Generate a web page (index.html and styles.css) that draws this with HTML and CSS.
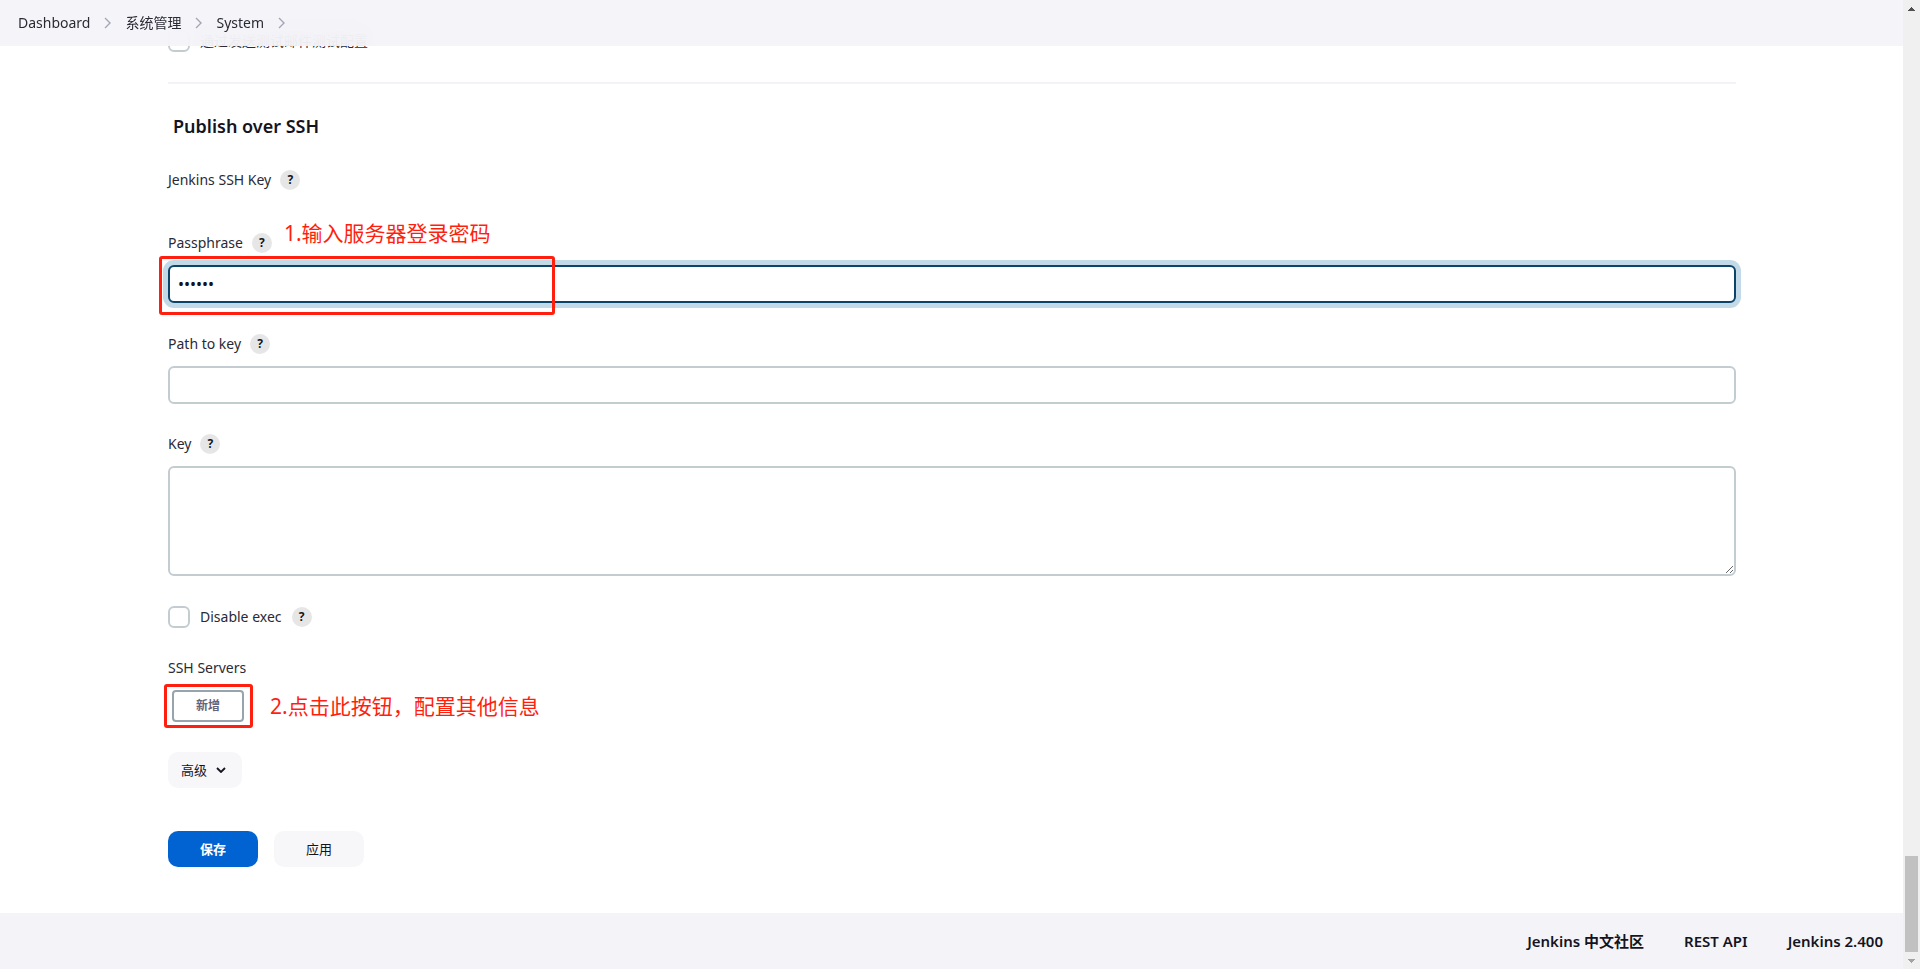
FILE: index.html
```html
<!DOCTYPE html>
<html lang="zh-CN">
<head>
    <meta charset="UTF-8">
    <meta name="viewport" content="width=device-width, initial-scale=1.0">
    <title>System [Jenkins]</title>
    <link rel="stylesheet" href="styles.css">
</head>
<body>
    <div class="page">
        <nav class="breadcrumbs">
            <a href="#">Dashboard</a>
            <svg class="chevron" viewBox="0 0 7 12"><path d="M1 1l5 5-5 5"/></svg>
            <a href="#">系统管理</a>
            <svg class="chevron" viewBox="0 0 7 12"><path d="M1 1l5 5-5 5"/></svg>
            <a href="#">System</a>
            <svg class="chevron" viewBox="0 0 7 12"><path d="M1 1l5 5-5 5"/></svg>
        </nav>

        <form class="config">
            <div class="check-row">
                <input type="checkbox" id="testMail">
                <label for="testMail">通过发送测试邮件测试配置</label>
            </div>

            <section class="section">
                <h2>Publish over SSH</h2>

                <div class="label-row">
                    <span>Jenkins SSH Key</span>
                    <button type="button" class="help">?</button>
                </div>

                <div class="field passphrase">
                    <div class="label-row">
                        <label for="passphrase">Passphrase</label>
                        <button type="button" class="help">?</button>
                        <span class="note">1.输入服务器登录密码</span>
                    </div>
                    <div class="input-wrap">
                        <input type="password" id="passphrase" class="input focused" value="123456">
                        <div class="mark mark-input"></div>
                    </div>
                </div>

                <div class="field">
                    <div class="label-row">
                        <label for="keyPath">Path to key</label>
                        <button type="button" class="help">?</button>
                    </div>
                    <input type="text" id="keyPath" class="input">
                </div>

                <div class="field">
                    <div class="label-row">
                        <label for="key">Key</label>
                        <button type="button" class="help">?</button>
                    </div>
                    <textarea id="key" class="input textarea"></textarea>
                </div>

                <div class="field check-row">
                    <input type="checkbox" id="disableExec">
                    <label for="disableExec">Disable exec</label>
                    <button type="button" class="help">?</button>
                </div>

                <div class="field">
                    <div class="label-row">SSH Servers</div>
                    <div class="servers">
                        <div class="add-wrap">
                            <button type="button" class="add">新增</button>
                            <div class="mark mark-add"></div>
                        </div>
                        <span class="note">2.点击此按钮，配置其他信息</span>
                    </div>
                </div>

                <button type="button" class="btn advanced">
                    高级
                    <svg viewBox="0 0 10 6"><path d="M1 1l4 4 4-4"/></svg>
                </button>
            </section>

            <div class="actions">
                <button type="submit" class="btn primary">保存</button>
                <button type="button" class="btn">应用</button>
            </div>
        </form>

        <footer class="footer">
            <a href="#">Jenkins 中文社区</a>
            <a href="#">REST API</a>
            <a href="#">Jenkins 2.400</a>
        </footer>
    </div>

    <div class="scrollbar">
        <svg class="arrow-up" viewBox="0 0 7 4"><path d="M3 0h1v1h1v1h1v1h1v1H0V3h1V2h1V1h1z"/></svg>
        <div class="thumb"></div>
        <svg class="arrow-down" viewBox="0 0 7 4"><path d="M0 0h7v1H6v1H5v1H4v1H3V3H2V2H1V1H0z"/></svg>
    </div>
</body>
</html>
```

FILE: styles.css
```css
* {
    box-sizing: border-box;
}
body {
    display: flex;
    height: 100vh;
    margin: 0;
    overflow: hidden;
    font-family: "Noto Sans", "Noto Sans CJK SC", sans-serif;
    font-size: 14px;
    line-height: 20px;
    color: #14141f;
    background: #fff;
}
a {
    color: inherit;
    text-decoration: none;
}
button,
input,
textarea {
    font: inherit;
    color: inherit;
    margin: 0;
}
.page {
    position: relative;
    flex: 1;
    display: flex;
    flex-direction: column;
}

/* header */
.breadcrumbs {
    position: absolute;
    top: 0;
    left: 0;
    right: 0;
    z-index: 2;
    display: flex;
    align-items: center;
    gap: 14px;
    height: 46px;
    padding: 0 18px;
    background: rgba(244, 244, 248, 0.9);
    backdrop-filter: blur(15px);
}
.breadcrumbs a,
.label-row,
.check-row label {
    color: #2a2a35;
}
.chevron {
    width: 7px;
    height: 12px;
    fill: none;
    stroke: #a5a5b5;
    stroke-width: 1.4;
}

/* form */
.config {
    flex: 1;
    padding: 30px 167px 0 168px;
}
.section {
    margin-top: 30px;
    border-top: 2px solid #f2f2f8;
    padding-top: 30px;
}
h2 {
    margin: 0 0 32px;
    padding-left: 5px;
    font-size: 18px;
    line-height: 24px;
    font-weight: 600;
}
.label-row {
    display: flex;
    align-items: center;
    gap: 9px;
    height: 20px;
    margin-bottom: 12px;
}
.field {
    margin-bottom: 30px;
}
.passphrase {
    margin-top: 43px;
    margin-bottom: 31px;
}
.help {
    width: 20px;
    height: 20px;
    padding: 0;
    border: none;
    border-radius: 50%;
    background: #e6e6e6;
    color: #14141f;
    font-size: 12px;
    font-weight: 700;
    line-height: 20px;
}
.input {
    display: block;
    width: 100%;
    height: 38px;
    padding: 0 8px;
    border: 2px solid #c3ccd1;
    border-radius: 6px;
    background: #fff;
    font-size: 16px;
    outline: none;
}
.focused {
    border-color: #0b4468;
    box-shadow: 0 0 0 5px #c2d9e7;
}
.textarea {
    height: 110px;
    resize: vertical;
}
.check-row {
    display: flex;
    align-items: center;
    gap: 10px;
    height: 22px;
}
.check-row input {
    appearance: none;
    width: 22px;
    height: 22px;
    border: 2px solid #c3ccd1;
    border-radius: 6px;
    background: #fff;
}
.servers {
    display: flex;
    align-items: center;
    gap: 26px;
}
.add {
    display: block;
    width: 72px;
    height: 32px;
    padding: 0;
    border: 2px solid #98a4ad;
    border-radius: 4px;
    background: #fff;
    color: #63637c;
    font-size: 12px;
    font-weight: 600;
}
.btn {
    min-width: 90px;
    height: 36px;
    padding: 0;
    border: none;
    border-radius: 10px;
    background: #f7f7fa;
    font-size: 13px;
}
.primary {
    background: #0063d1;
    color: #fff;
    font-weight: 700;
}
.advanced {
    display: flex;
    align-items: center;
    gap: 9px;
    min-width: 0;
    padding: 0 16px 0 13px;
}
.advanced svg {
    width: 10px;
    height: 6px;
    fill: none;
    stroke: #14141f;
    stroke-width: 1.8;
}
.actions {
    display: flex;
    gap: 16px;
    margin-top: 43px;
}

/* red notes */
.note {
    color: #ff1f0f;
    font-size: 21px;
    line-height: 32px;
}
.passphrase .note {
    margin: -20px 0 0 3px;
}
.input-wrap,
.add-wrap {
    position: relative;
}
.add-wrap {
    margin-left: 4px;
}
.mark {
    position: absolute;
    border: 3px solid #ff1f0f;
    border-radius: 3px;
    pointer-events: none;
}
.mark-input {
    top: -9px;
    left: -9px;
    width: 396px;
    height: 59px;
}
.mark-add {
    inset: -6px -9px -6px -8px;
}

/* footer */
.footer {
    display: flex;
    align-items: center;
    justify-content: flex-end;
    gap: 40px;
    height: 56px;
    padding: 0 20px;
    background: #f4f4f8;
    font-size: 15px;
    font-weight: 600;
}

/* scrollbar */
.scrollbar {
    display: flex;
    flex-direction: column;
    align-items: center;
    width: 17px;
    padding: 7px 0 6px;
    background: #f0f0f0;
}
.scrollbar svg {
    width: 7px;
    height: 4px;
    fill: #505050;
}
.scrollbar .arrow-down {
    fill: #a3a3a3;
}
.thumb {
    width: 13px;
    height: 96px;
    margin: auto 0 7px;
    background: #c1c1c1;
}
```
